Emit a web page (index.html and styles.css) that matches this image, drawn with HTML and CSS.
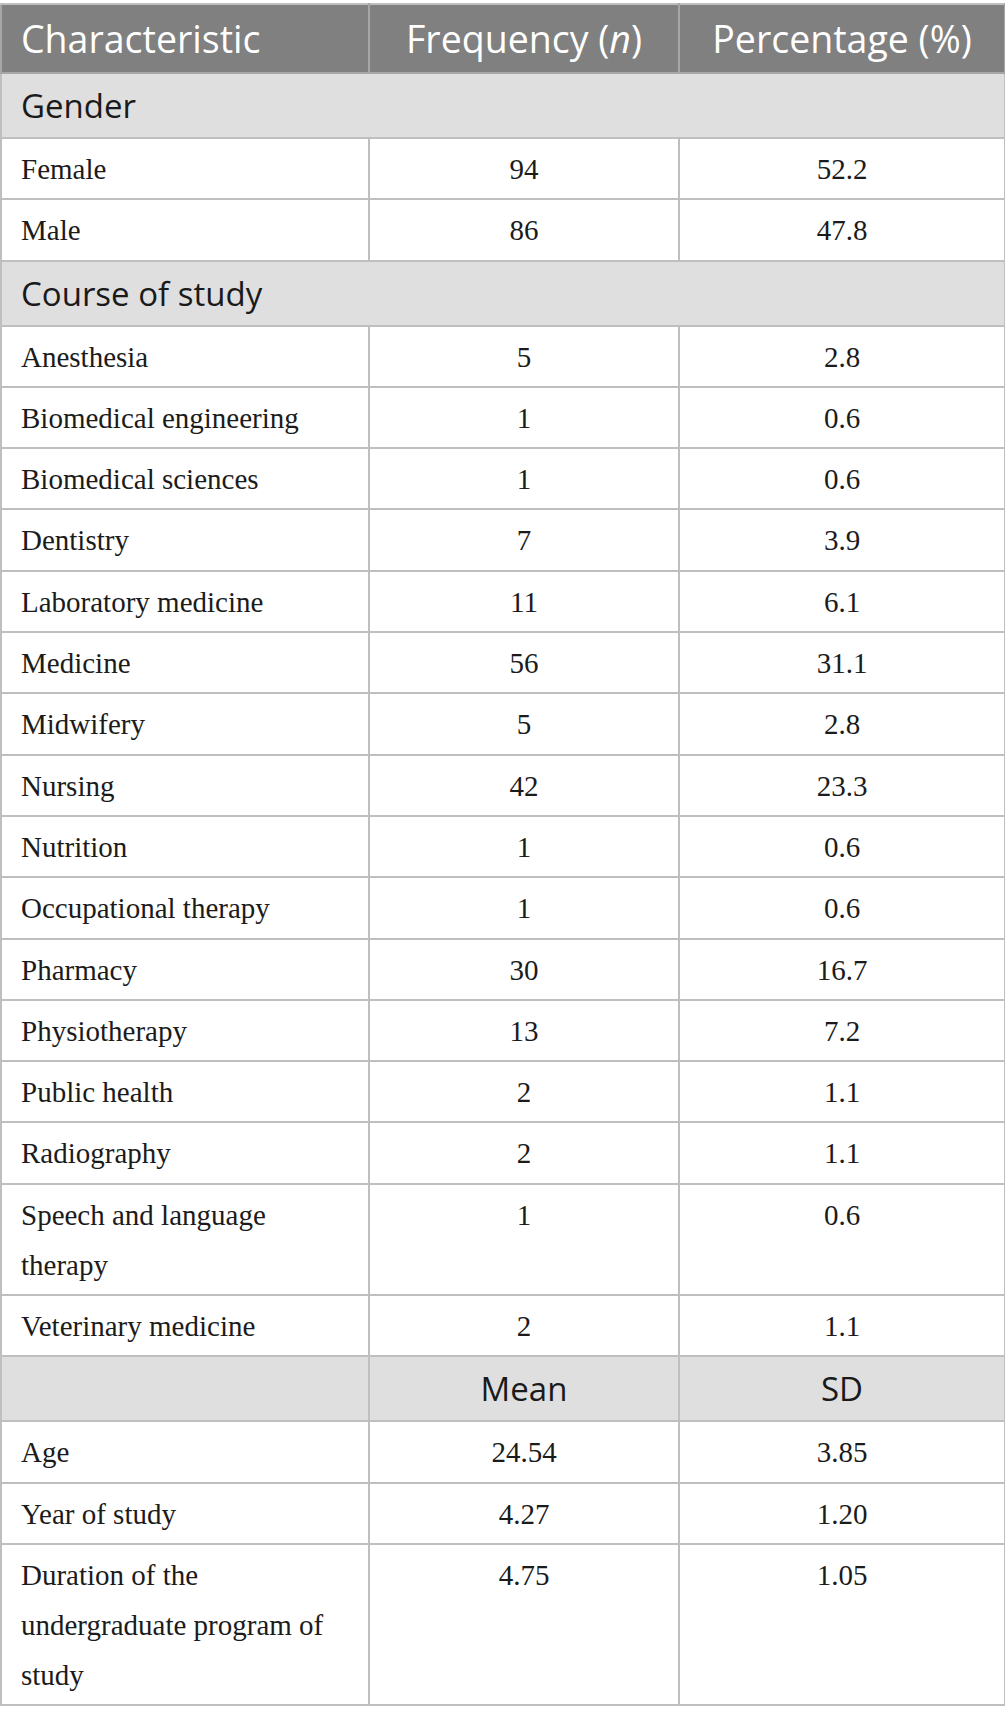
FILE: index.html
```html
<!DOCTYPE html>
<html lang="en">
<head>
<meta charset="utf-8">
<title>Characteristics</title>
<link rel="stylesheet" href="styles.css">
</head>
<body>
<table class="data">
  <colgroup>
    <col class="c1"><col class="c2"><col class="c3">
  </colgroup>
  <thead>
    <tr class="head">
      <th class="left">Characteristic</th>
      <th>Frequency (<i>n</i>)</th>
      <th>Percentage (%)</th>
    </tr>
  </thead>
  <tbody>
    <tr class="section"><td colspan="3">Gender</td></tr>
    <tr><td>Female</td><td class="num">94</td><td class="num">52.2</td></tr>
    <tr><td>Male</td><td class="num">86</td><td class="num">47.8</td></tr>
    <tr class="section"><td colspan="3">Course of study</td></tr>
    <tr><td>Anesthesia</td><td class="num">5</td><td class="num">2.8</td></tr>
    <tr><td>Biomedical engineering</td><td class="num">1</td><td class="num">0.6</td></tr>
    <tr><td>Biomedical sciences</td><td class="num">1</td><td class="num">0.6</td></tr>
    <tr><td>Dentistry</td><td class="num">7</td><td class="num">3.9</td></tr>
    <tr><td>Laboratory medicine</td><td class="num">11</td><td class="num">6.1</td></tr>
    <tr><td>Medicine</td><td class="num">56</td><td class="num">31.1</td></tr>
    <tr><td>Midwifery</td><td class="num">5</td><td class="num">2.8</td></tr>
    <tr><td>Nursing</td><td class="num">42</td><td class="num">23.3</td></tr>
    <tr><td>Nutrition</td><td class="num">1</td><td class="num">0.6</td></tr>
    <tr><td>Occupational therapy</td><td class="num">1</td><td class="num">0.6</td></tr>
    <tr><td>Pharmacy</td><td class="num">30</td><td class="num">16.7</td></tr>
    <tr><td>Physiotherapy</td><td class="num">13</td><td class="num">7.2</td></tr>
    <tr><td>Public health</td><td class="num">2</td><td class="num">1.1</td></tr>
    <tr><td>Radiography</td><td class="num">2</td><td class="num">1.1</td></tr>
    <tr><td>Speech and language therapy</td><td class="num">1</td><td class="num">0.6</td></tr>
    <tr><td>Veterinary medicine</td><td class="num">2</td><td class="num">1.1</td></tr>
    <tr class="section"><td></td><td class="num">Mean</td><td class="num">SD</td></tr>
    <tr><td>Age</td><td class="num">24.54</td><td class="num">3.85</td></tr>
    <tr><td>Year of study</td><td class="num">4.27</td><td class="num">1.20</td></tr>
    <tr><td>Duration of the undergraduate program of study</td><td class="num">4.75</td><td class="num">1.05</td></tr>
  </tbody>
</table>
</body>
</html>
```

FILE: styles.css
```css
html, body {
  margin: 0;
  padding: 0;
  background: #ffffff;
}

.data {
  margin-top: 3px;
  width: 1004px;
  border-collapse: collapse;
  table-layout: fixed;
  font-family: "Liberation Serif", "Times New Roman", serif;
  font-size: 29px;
  color: #1b1b1b;
}

.c1 { width: 368px; }
.c2 { width: 310px; }
.c3 { width: 326px; }

.data th,
.data td {
  border: 2px solid #bfbfbf;
  padding: 5px 30px 4.3px 19px;
  line-height: 50px;
  vertical-align: top;
  text-align: left;
}

.head th {
  background: #7f807f;
  color: #ffffff;
  font-family: "Open Sans", "Noto Sans", sans-serif;
  font-weight: 400;
  font-size: 37.5px;
  height: 67px;
  padding: 0 6px;
  line-height: 67px;
  text-align: center;
  white-space: nowrap;
  border-color: #a6a6a6;
  border-top-color: #bfbfbf;
}

.head th.left {
  text-align: left;
  padding-left: 19px;
}

.head th i {
  font-style: italic;
}

.section td {
  background: #e0dfe0;
  font-family: "Open Sans", "Noto Sans", sans-serif;
  font-size: 33px;
  color: #1a1a1a;
  height: 63px;
  padding-top: 0;
  padding-bottom: 0;
  line-height: 63px;
}

.data td.num {
  text-align: center;
  padding-left: 10px;
  padding-right: 10px;
}
```
